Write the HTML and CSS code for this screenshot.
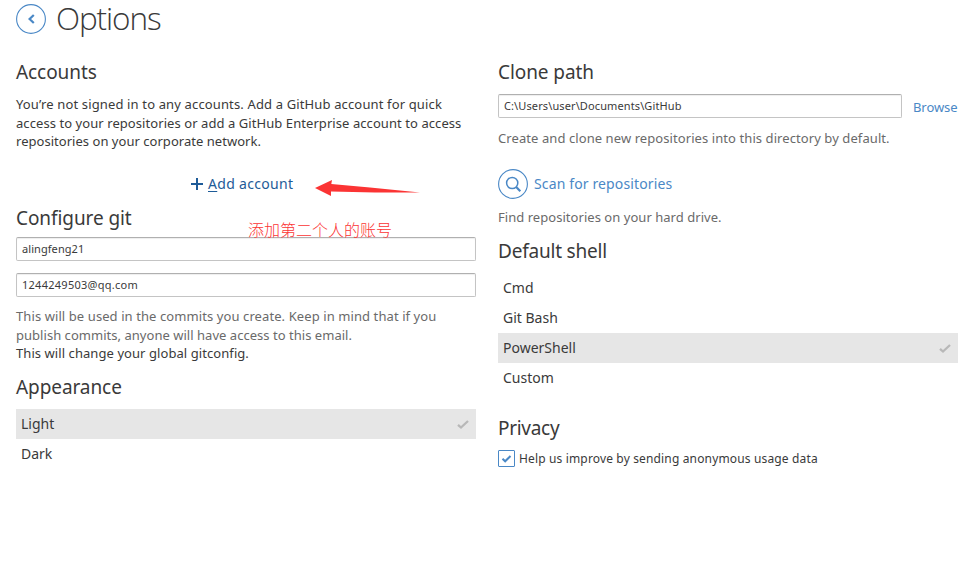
FILE: index.html
```html
<!DOCTYPE html>
<html lang="en">
<head>
<meta charset="utf-8">
<title>Options</title>
<link rel="stylesheet" href="styles.css">
</head>
<body>
<header class="header">
  <svg class="round-icon back" viewBox="0 0 30 30"><circle cx="15" cy="15" r="14.4"/><path class="bold" d="M17.8 11 L13.6 15 L17.8 19"/></svg>
  <h1>Options</h1>
</header>
<main class="columns">
  <section class="column">
    <h2>Accounts</h2>
    <p class="intro"><span class="line l1">You’re not signed in to any accounts. Add a GitHub account for quick</span><span class="line l2">access to your repositories or add a GitHub Enterprise account to access</span><span class="line l3">repositories on your corporate network.</span></p>
    <div class="add">
      <svg class="plus" viewBox="0 0 12 12"><path d="M6 0v12M0 6h12"/></svg>
      <a class="add-label"><u>A</u>dd account</a>
      <svg class="arrow" viewBox="0 0 106 18"><path d="M0 8 L17 0 L16.3 4 L55 7.4 L105 12.5 L60 12.5 L16 11.6 L16 16 Z"/></svg>
    </div>
    <h2 class="configure">Configure git</h2>
    <div class="field name">alingfeng21<span class="note">添加第二个人的账号</span></div>
    <div class="field email">1244249503@qq.com</div>
    <p class="help"><span class="line h1">This will be used in the commits you create. Keep in mind that if you</span><span class="line h2">publish commits, anyone will have access to this email.</span><span class="line dark h3">This will change your global gitconfig.</span></p>
    <h2 class="appearance">Appearance</h2>
    <ul class="list themes">
      <li class="selected">Light<svg class="check" viewBox="0 0 12 9"><path d="M1 4.8 L4 7.5 L11 1"/></svg></li>
      <li>Dark</li>
    </ul>
  </section>
  <section class="column">
    <h2>Clone path</h2>
    <div class="path-row">
      <div class="field path">C:\Users\user\Documents\GitHub</div>
      <a class="browse">Browse</a>
    </div>
    <p class="hint create">Create and clone new repositories into this directory by default.</p>
    <div class="scan">
      <svg class="round-icon" viewBox="0 0 30 30"><circle cx="15" cy="15" r="14.4"/><circle class="lens" cx="14.2" cy="14" r="5.6"/><path class="handle" d="M18.2 18 L22.3 22.2"/></svg>
      <a>Scan for repositories</a>
    </div>
    <p class="hint find">Find repositories on your hard drive.</p>
    <h2 class="shell">Default shell</h2>
    <ul class="list shells">
      <li>Cmd</li>
      <li>Git Bash</li>
      <li class="selected">PowerShell<svg class="check" viewBox="0 0 12 9"><path d="M1 4.8 L4 7.5 L11 1"/></svg></li>
      <li>Custom</li>
    </ul>
    <h2 class="privacy">Privacy</h2>
    <div class="consent">
      <span class="box"><svg viewBox="0 0 11 9"><path d="M1 4.2 L4 7 L10 1.2"/></svg></span>
      <span>Help us improve by sending anonymous usage data</span>
    </div>
  </section>
</main>
</body>
</html>
```
FILE: styles.css
```css
* { box-sizing: border-box; }
body {
  margin: 0;
  background: #fff;
  color: #3a3a3a;
  font: 13px/18.5px "Noto Sans", "Open Sans", sans-serif;
  letter-spacing: 0.07px;
  white-space: nowrap;
}
h1, h2, p, ul { margin: 0; padding: 0; font-weight: 400; }
svg { display: block; flex: none; overflow: visible; }
.header { display: flex; align-items: flex-start; height: 58px; padding-left: 16px; gap: 10px; }
h1 {
  padding-right: 4px;
  font: 300 31.5px/35px "Open Sans", "Noto Sans", sans-serif;
  letter-spacing: -1.1px;
}
.round-icon { width: 30px; height: 30px; fill: none; stroke: #4a88c6; stroke-width: 1.1; }
.back { margin-top: 4px; }
.bold { stroke-width: 2.2; }
.lens { stroke-width: 1.5; }
.handle { stroke-width: 2.2; }
.columns { display: flex; gap: 22px; padding-left: 16px; }
.column { width: 460px; }
h2 { height: 28px; font-size: 19px; line-height: 28px; letter-spacing: -0.08px; }
.line { display: block; }
.intro { margin-top: 9px; }
.l1 { letter-spacing: 0.14px; }
.l3, .h2 { letter-spacing: 0.03px; }
.h1 { letter-spacing: 0.09px; }
.add { display: flex; height: 30px; margin-top: 18.5px; padding-left: 175px; line-height: 30px; font-size: 14px; color: #1e5b98; }
.plus { width: 12px; height: 12px; margin: 9px 5px 0 0; stroke: #1e5b98; stroke-width: 2; }
.add-label { width: 107px; letter-spacing: 0.3px; }
.add-label u { text-decoration-thickness: 1px; text-underline-offset: 2px; }
.arrow { width: 106px; height: 18px; margin-top: 11px; fill: #fb3434; }
.configure { margin-top: 5px; }
.field {
  height: 24px;
  border: 1px solid #c4c4c4;
  border-top-color: #b0b0b0;
  border-radius: 2px;
  box-shadow: inset 0 1px 1px #eee;
  padding-left: 5px;
  font-size: 11px;
  line-height: 22px;
}
.name { position: relative; margin-top: 5px; }
.note {
  position: absolute;
  left: 231px;
  top: -19px;
  color: #fb3434;
  font: 300 16px/20px "Noto Sans CJK SC", sans-serif;
  letter-spacing: 0;
}
.email { margin-top: 12px; letter-spacing: 0.27px; }
.help { margin-top: 10px; color: #6a6a6a; }
.dark { color: #3a3a3a; }
.appearance { margin-top: 10.5px; }
.list { list-style: none; font-size: 14px; letter-spacing: 0; }
.list li { display: flex; align-items: center; justify-content: space-between; height: 30px; padding: 0 7px 0 5px; line-height: 30px; }
.selected { background: #e6e6e6; }
.themes { margin-top: 8px; }
.check { width: 12px; height: 9px; fill: none; stroke: #b8b8b8; stroke-width: 2.3; }
.path-row { display: flex; gap: 11px; height: 24px; margin-top: 8px; }
.path { width: 404px; letter-spacing: 0.11px; }
.browse { color: #4a88c6; line-height: 26px; letter-spacing: -0.08px; }
.hint { height: 19px; line-height: 19px; color: #6a6a6a; }
.create { margin-top: 11px; letter-spacing: 0.08px; }
.scan { display: flex; gap: 6px; margin-top: 21px; color: #4a88c6; font-size: 14px; line-height: 30px; letter-spacing: 0.13px; }
.find { margin-top: 9px; letter-spacing: 0.04px; }
.shell { margin-top: 10px; letter-spacing: -0.2px; }
.shells { margin-top: 8px; }
.privacy { margin-top: 21px; letter-spacing: -0.3px; }
.consent { display: flex; gap: 4px; margin-top: 8px; font-size: 12px; line-height: 18px; letter-spacing: 0.15px; }
.box { width: 17px; height: 17px; border: 1px solid #4a88c6; border-radius: 1px; padding: 4px 2px; }
.box svg { width: 11px; height: 8px; fill: none; stroke: #4a88c6; stroke-width: 2.3; }
```
